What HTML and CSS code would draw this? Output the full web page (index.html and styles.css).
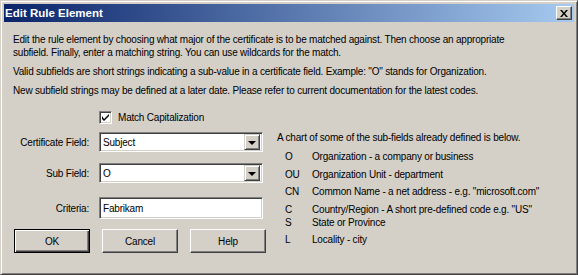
FILE: index.html
```html
<!DOCTYPE html>
<html lang="en">
<head>
    <meta charset="UTF-8">
    <title>Edit Rule Element</title>
    <link rel="stylesheet" href="styles.css">
</head>
<body>

    <div class="window">
        <div class="titlebar">
            <span class="title">Edit Rule Element</span>
            <button class="close-btn">
                <svg width="8" height="7" viewBox="0 0 8 7">
                    <path d="M0 0h2l2 2.5L6 0h2L5 3.5 8 7H6L4 4.5 2 7H0l3-3.5z" fill="#000"/>
                </svg>
            </button>
        </div>

        <div class="content">
            <p class="intro">Edit the rule element by choosing what major of the certificate is to be matched against. Then choose an appropriate<br>subfield. Finally, enter a matching string. You can use wildcards for the match.</p>
            <p class="intro">Valid subfields are short strings indicating a sub-value in a certificate field. Example: "O" stands for Organization.</p>
            <p class="intro">New subfield strings may be defined at a later date. Please refer to current documentation for the latest codes.</p>

            <div class="lower">
                <div class="form">
                    <label class="check-row">
                        <span class="checkbox">
                            <svg width="7" height="7" viewBox="0 0 7 7">
                                <path d="M0 2v3l2 2 5-5V-0L2 5z" fill="#000"/>
                            </svg>
                        </span>
                        Match Capitalization
                    </label>

                    <div class="field-row row-cert">
                        <span class="field-label">Certificate Field:</span>
                        <div class="combo">
                            <span class="combo-value">Subject</span>
                            <span class="combo-arrow"><i class="tri"></i></span>
                        </div>
                    </div>

                    <div class="field-row row-sub">
                        <span class="field-label">Sub Field:</span>
                        <div class="combo">
                            <span class="combo-value">O</span>
                            <span class="combo-arrow"><i class="tri"></i></span>
                        </div>
                    </div>

                    <div class="field-row row-crit">
                        <span class="field-label">Criteria:</span>
                        <div class="textbox">Fabrikam</div>
                    </div>

                    <div class="buttons">
                        <button class="btn btn-default">OK</button>
                        <button class="btn">Cancel</button>
                        <button class="btn">Help</button>
                    </div>
                </div>

                <div class="chart">
                    <p class="chart-head">A chart of some of the sub-fields already defined is below.</p>
                    <div class="chart-item">
                        <span class="code">O</span><span>Organization - a company or business</span>
                    </div>
                    <div class="chart-item">
                        <span class="code">OU</span><span>Organization Unit - department</span>
                    </div>
                    <div class="chart-item">
                        <span class="code">CN</span><span>Common Name - a net address - e.g. "microsoft.com"</span>
                    </div>
                    <div class="chart-item">
                        <span class="code">C</span><span>Country/Region - A short pre-defined code e.g. "US"</span>
                        <span class="code">S</span><span>State or Province</span>
                    </div>
                    <div class="chart-item">
                        <span class="code">L</span><span>Locality - city</span>
                    </div>
                </div>
            </div>
        </div>
    </div>

</body>
</html>
```

FILE: styles.css
```css
/* General */
body {
    margin: 0;
    font-family: 'Liberation Sans', Arial, sans-serif;
    font-size: 10px;
    letter-spacing: -0.2px;
    color: #000;
    background: #d4d0c8;
}

/* Window frame */
.window {
    box-sizing: border-box;
    width: 578px;
    height: 275px;
    background: #d4d0c8;
    border: 1px solid;
    border-color: #d4d0c8 #404040 #404040 #d4d0c8;
    box-shadow: inset 1px 1px 0 #fff, inset -1px -1px 0 #808080;
    padding: 3px;
}

/* Title bar */
.titlebar {
    height: 18px;
    display: flex;
    align-items: center;
    justify-content: space-between;
    padding: 0 2px 0 1px;
    background: linear-gradient(to right, #0a246a, #a6caf0);
}

.title {
    color: #fff;
    font-weight: bold;
    font-size: 11.5px;
    letter-spacing: 0;
}

.close-btn {
    width: 16px;
    height: 14px;
    padding: 0;
    display: flex;
    align-items: center;
    justify-content: center;
    background: #d4d0c8;
    border: 1px solid;
    border-color: #fff #404040 #404040 #fff;
    box-shadow: inset -1px -1px 0 #808080;
}

/* Content */
.content {
    padding: 11px 9px 0 9px;
}

.intro {
    margin: 0 0 6px 0;
    line-height: 13px;
    white-space: nowrap;
}

.lower {
    display: flex;
    gap: 8px;
    margin-top: 14px;
}

/* Left form */
.form {
    width: 255px;
    padding-left: 1px;
}

.check-row {
    display: flex;
    align-items: center;
    gap: 6px;
    margin-left: 85px;
    height: 13px;
}

.checkbox {
    box-sizing: border-box;
    width: 13px;
    height: 13px;
    display: flex;
    align-items: center;
    justify-content: center;
    background: #fff;
    border: 1px solid;
    border-color: #808080 #fff #fff #808080;
    box-shadow: inset 1px 1px 0 #404040, inset -1px -1px 0 #d4d0c8;
}

.field-row {
    display: grid;
    grid-template-columns: 75px 164px;
    column-gap: 10px;
    align-items: center;
}

.row-cert { margin-top: 8px; }
.row-sub { margin-top: 11px; }
.row-crit { margin-top: 14px; }

.field-label {
    text-align: right;
    white-space: nowrap;
}

.combo, .textbox {
    box-sizing: border-box;
    display: flex;
    align-items: center;
    background: #fff;
    border: 1px solid;
    border-color: #808080 #fff #fff #808080;
    box-shadow: inset 1px 1px 0 #404040, inset -1px -1px 0 #d4d0c8;
    padding: 2px 2px 2px 3px;
}

.combo {
    height: 20px;
    justify-content: space-between;
}

.textbox {
    height: 22px;
}

.combo-arrow {
    box-sizing: border-box;
    width: 16px;
    height: 16px;
    display: flex;
    align-items: center;
    justify-content: center;
    background: #d4d0c8;
    border: 1px solid;
    border-color: #d4d0c8 #404040 #404040 #d4d0c8;
    box-shadow: inset 1px 1px 0 #fff, inset -1px -1px 0 #808080;
}

.tri {
    width: 0;
    height: 0;
    border-left: 4px solid transparent;
    border-right: 4px solid transparent;
    border-top: 4px solid #000;
    margin-top: 1px;
}

/* Buttons */
.buttons {
    display: flex;
    gap: 12px;
    margin-top: 10px;
}

.btn {
    box-sizing: border-box;
    width: 76px;
    height: 24px;
    padding: 0;
    font-family: inherit;
    font-size: inherit;
    letter-spacing: inherit;
    color: #000;
    background: #d4d0c8;
    border: 1px solid;
    border-color: #fff #404040 #404040 #fff;
    box-shadow: inset -1px -1px 0 #808080;
}

.btn-default {
    border: 1px solid #000;
    box-shadow: inset 1px 1px 0 #fff, inset -1px -1px 0 #404040, inset -2px -2px 0 #808080;
}

/* Chart */
.chart {
    padding-top: 20px;
    line-height: 13px;
}

.chart-head {
    margin: 0 0 6px 0;
}

.chart-item {
    display: grid;
    grid-template-columns: 27px auto;
    padding-left: 8px;
    margin-bottom: 4.5px;
}
```
